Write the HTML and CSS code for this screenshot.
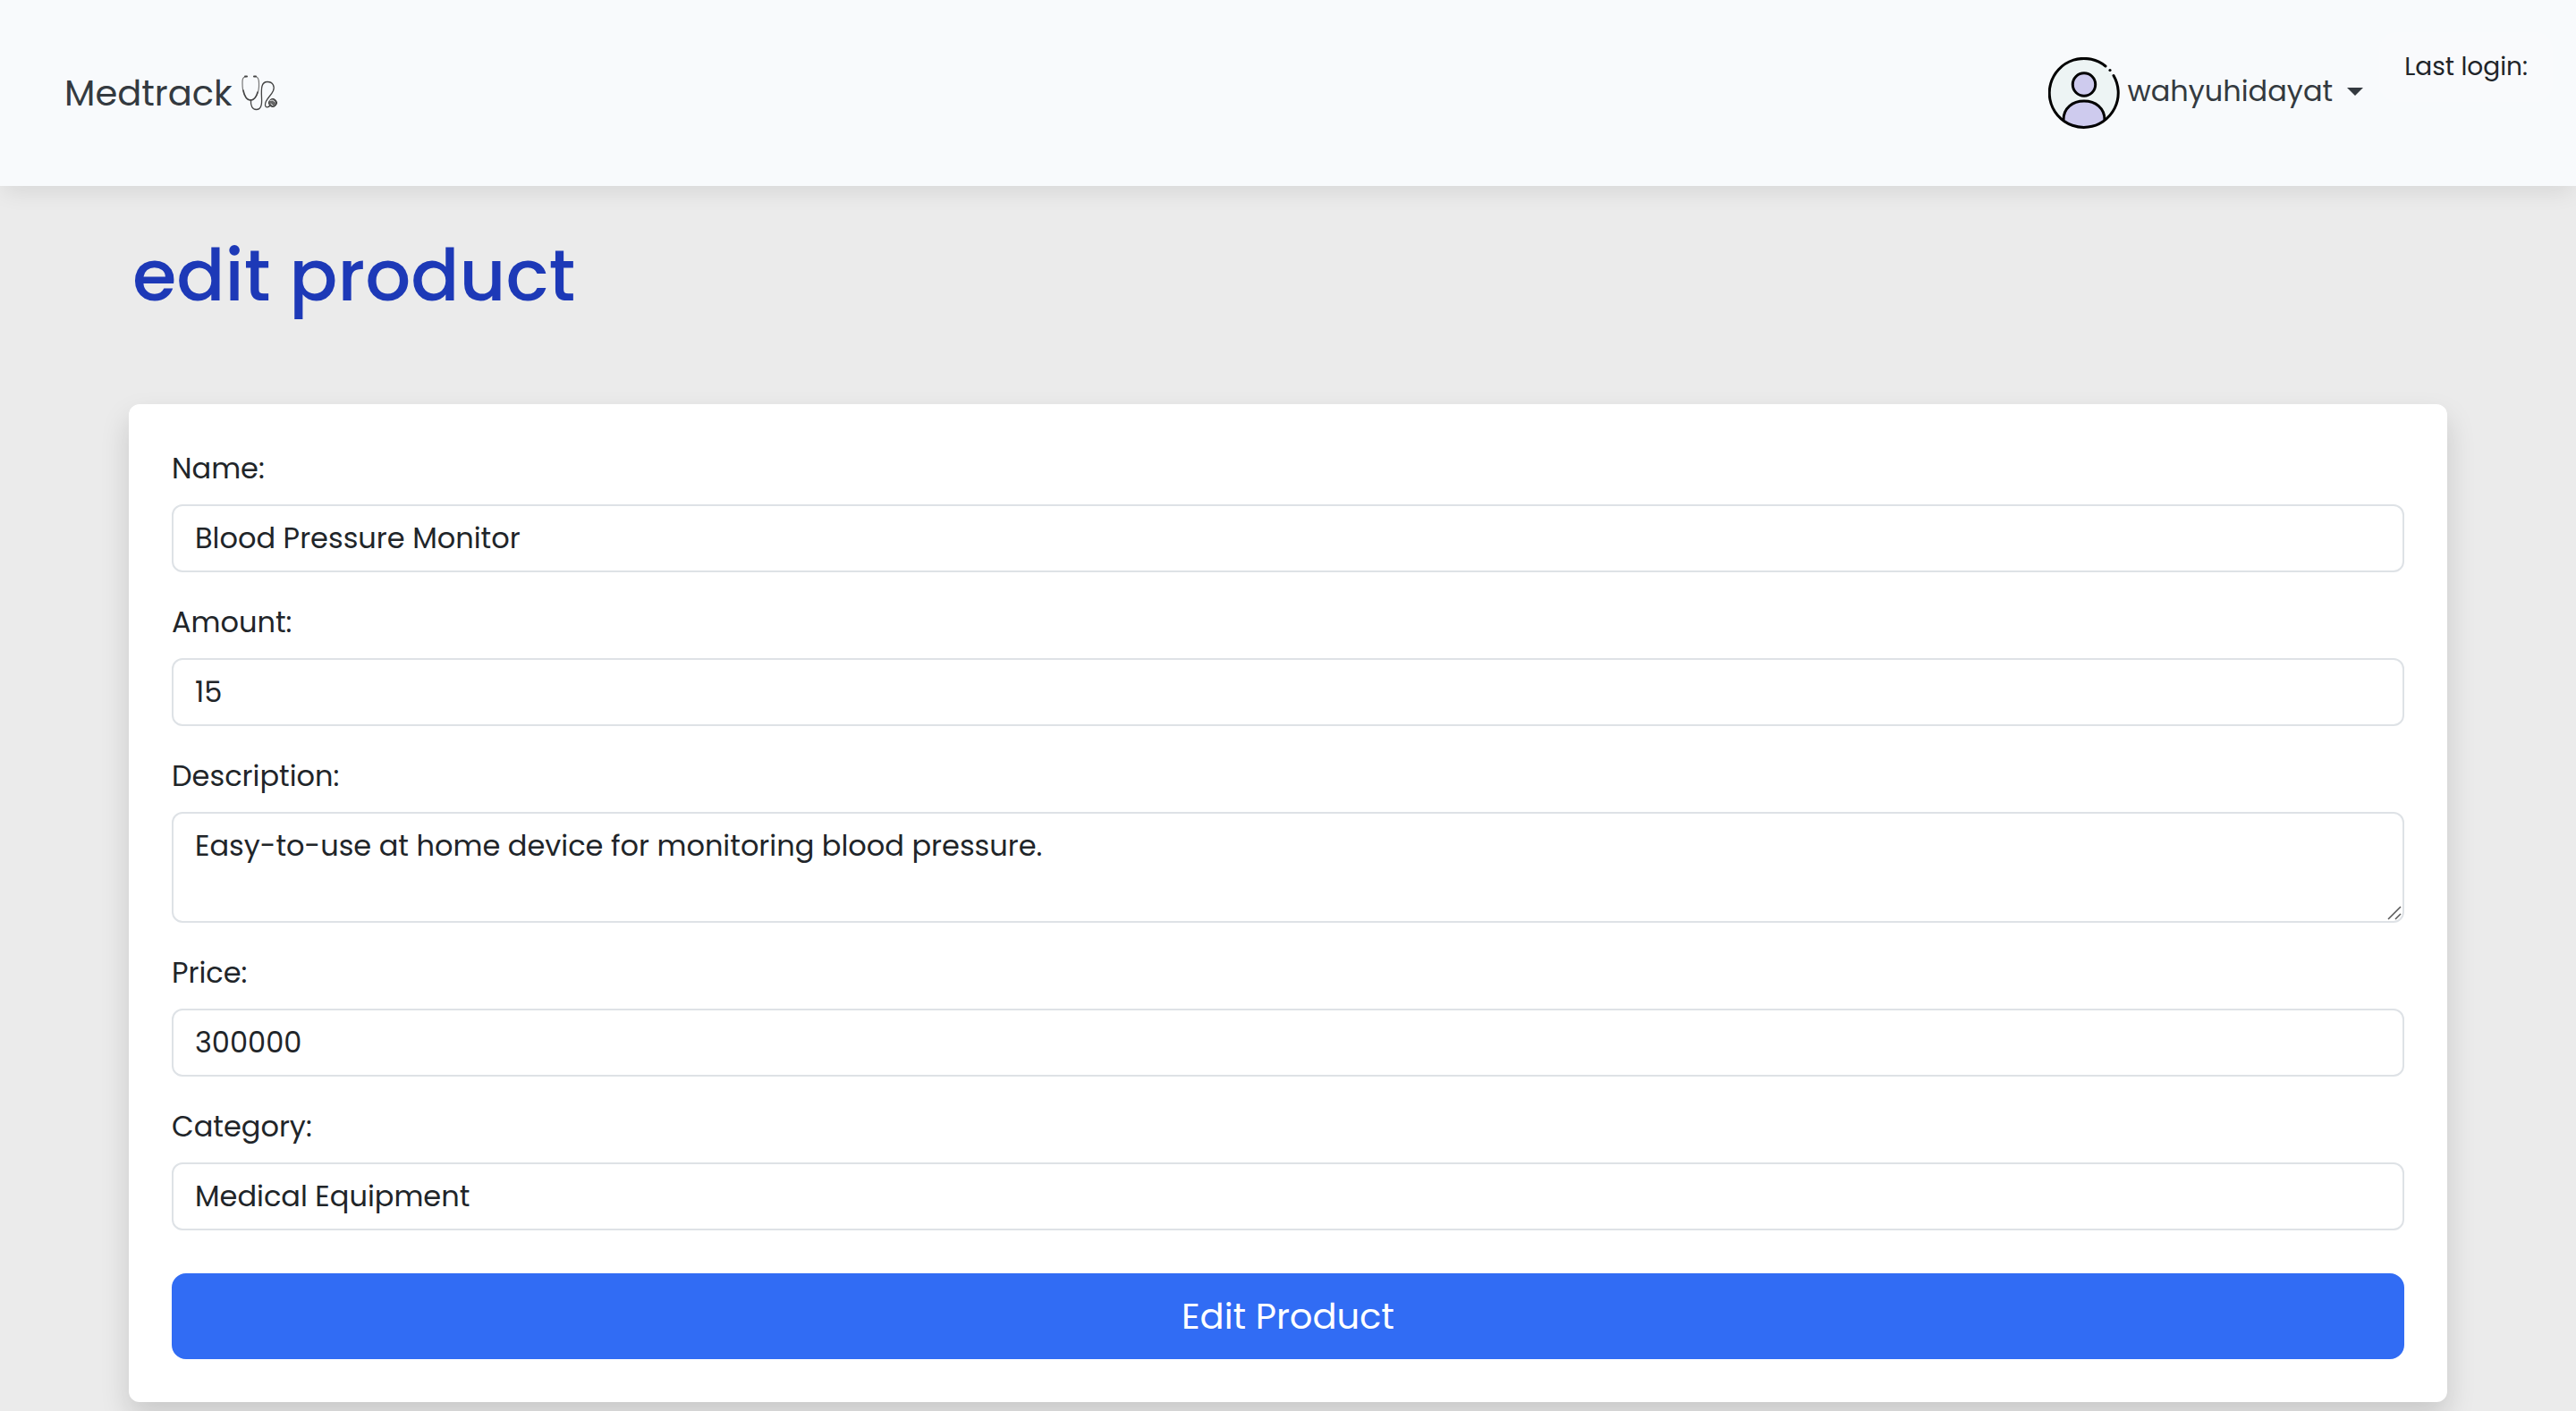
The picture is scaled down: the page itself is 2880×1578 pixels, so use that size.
FILE: index.html
```html
<!DOCTYPE html>
<html lang="en">
<head>
<meta charset="utf-8">
<meta name="viewport" content="width=device-width, initial-scale=1">
<title>Medtrack</title>
<link rel="stylesheet" href="styles.css">
</head>
<body>
<header class="navbar">
  <a class="brand" href="#">Medtrack
    <svg class="brand-icon" viewBox="0 0 40 40" aria-hidden="true" fill="none" stroke-linecap="round">
      <path d="M5 1.500C1 2 1 5 1 9c0 10 3 19 9 19s10-9 9.500-19c0-4-.5-7-4-7.500" stroke="#777" stroke-width="1.200"/>
      <path d="M4 1.500h2M14 1.500h2" stroke="#444" stroke-width="2"/>
      <path d="M2 17c1.500 7 4 11 8 11s6.500-3 8-9" stroke="#444" stroke-width="1.400"/>
      <path d="M10.500 28C10 34 12 38.500 16.500 38.500C22 38.500 23 33 22.500 25C22 15 22 7.500 29 7.500c6 0 8.500 5 6.500 10c-2.500 6-9.500 10-9 16c.5 3.500 3.500 3 6 0" stroke="#444" stroke-width="1.300"/>
      <circle cx="35" cy="31" r="4.500" fill="#666" stroke="#333" stroke-width="1"/>
      <path d="M32 28.500l3-.5 2 2M33 32l2 2" stroke="#ddd" stroke-width="1"/>
    </svg>
  </a>
  <div class="account">
    <button class="user" type="button" aria-haspopup="true">
      <svg class="avatar" viewBox="0 0 80 80" aria-hidden="true">
        <circle cx="40" cy="40" r="38" fill="#edf4f4"/>
        <path d="M17 70C17 56 27 49 40 49s23 7 23 21Q53 78.500 40 78.500T17 70Z" fill="#cecbee"/>
        <circle cx="40" cy="30.500" r="12.700" fill="#cecbee" stroke="#000" stroke-width="3"/>
        <path d="M17 70C17 57 27 49 40 49s23 8 23 21" fill="none" stroke="#000" stroke-width="3"/>
        <path d="M64 10A38.500 38.500 0 1 0 73 20.500" fill="none" stroke="#000" stroke-width="3" stroke-linecap="round"/>
        <circle cx="69" cy="14.500" r="1.600"/>
      </svg>
      <span class="user-menu">wahyuhidayat <span class="caret"></span></span>
    </button>
    <p class="last-login">Last login:</p>
  </div>
</header>
<main class="page">
  <h1 class="title">edit product</h1>
  <form class="card">
    <div class="field"><label for="name">Name:</label><input id="name" type="text" value="Blood Pressure Monitor"></div>
    <div class="field"><label for="amount">Amount:</label><input id="amount" type="text" inputmode="numeric" value="15"></div>
    <div class="field"><label for="description">Description:</label><textarea id="description" rows="2">Easy-to-use at home device for monitoring blood pressure.</textarea></div>
    <div class="field"><label for="price">Price:</label><input id="price" type="text" inputmode="numeric" value="300000"></div>
    <div class="field"><label for="category">Category:</label><input id="category" type="text" value="Medical Equipment"></div>
    <button class="submit" type="submit">Edit Product</button>
  </form>
</main>
</body>
</html>
```
FILE: styles.css
```css
*, *::before, *::after { box-sizing: border-box; }

body {
  margin: 0;
  background: #ebebeb;
  color: #212529;
  font-family: Poppins, Inter, "Open Sans", sans-serif;
  font-size: 32px;
  line-height: 48px;
}

.navbar {
  display: flex;
  justify-content: space-between;
  align-items: center;
  height: 208px;
  padding: 0 26px 0 72px;
  background: #f8fafc;
  box-shadow: 0 10px 24px -4px rgba(0, 0, 0, .09);
}

.brand {
  display: flex;
  align-items: center;
  gap: 10px;
  color: #343a40;
  font-size: 40px;
  line-height: 60px;
  text-decoration: none;
}

.brand-icon { width: 40px; height: 40px; }

.account {
  display: flex;
  align-self: stretch;
  align-items: center;
  gap: 18px;
}

.user {
  display: flex;
  align-items: center;
  gap: 8px;
  padding: 0;
  border: 0;
  background: none;
  color: #343a40;
  font: inherit;
}

.avatar { width: 80px; height: 80px; }

.user-menu {
  display: flex;
  align-items: center;
  gap: 16px;
  padding-bottom: 4px;
}

.caret {
  border: 9px solid transparent;
  border-top-color: currentColor;
  border-bottom: 0;
}

.last-login {
  align-self: flex-start;
  margin: 36px 0 0;
  padding: 18px 28px;
  border-radius: 20px;
  background: #f9fafc;
  font-size: 28px;
  line-height: 42px;
}

.page {
  width: 90%;
  margin: 0 auto;
  padding: 52px 0 10px;
}

.title {
  margin: 0 0 96px;
  padding-left: 4px;
  color: #1d39b7;
  font-size: 80px;
  font-weight: 500;
  line-height: 96px;
}

.card {
  display: flex;
  flex-direction: column;
  gap: 32px;
  padding: 48px;
  border-radius: 12px;
  background: #fff;
  box-shadow: 0 16px 32px rgba(0, 0, 0, .15);
}

.field {
  display: flex;
  flex-direction: column;
  gap: 16px;
}

.field input,
.field textarea {
  display: block;
  width: 100%;
  margin: 0;
  padding: 12px 24px;
  border: 2px solid #dee2e6;
  border-radius: 12px;
  background: #fff;
  color: inherit;
  font: inherit;
}

.field input { height: 76px; }

.field textarea {
  height: 124px;
  resize: vertical;
  background: #fff url("data:image/svg+xml,%3Csvg xmlns='http://www.w3.org/2000/svg' width='20' height='20'%3E%3Cpath d='M4 18L18 4M12 18L18 12' stroke='%23555' stroke-width='1.500'/%3E%3C/svg%3E") no-repeat right bottom;
}

/* The grip is drawn as the background above */
.field textarea::-webkit-resizer { background: transparent; }

.submit {
  margin-top: 16px;
  padding: 16px;
  border: 2px solid #316cf4;
  border-radius: 16px;
  background: #316cf4;
  color: #fff;
  font: inherit;
  font-size: 40px;
  line-height: 60px;
}
```
